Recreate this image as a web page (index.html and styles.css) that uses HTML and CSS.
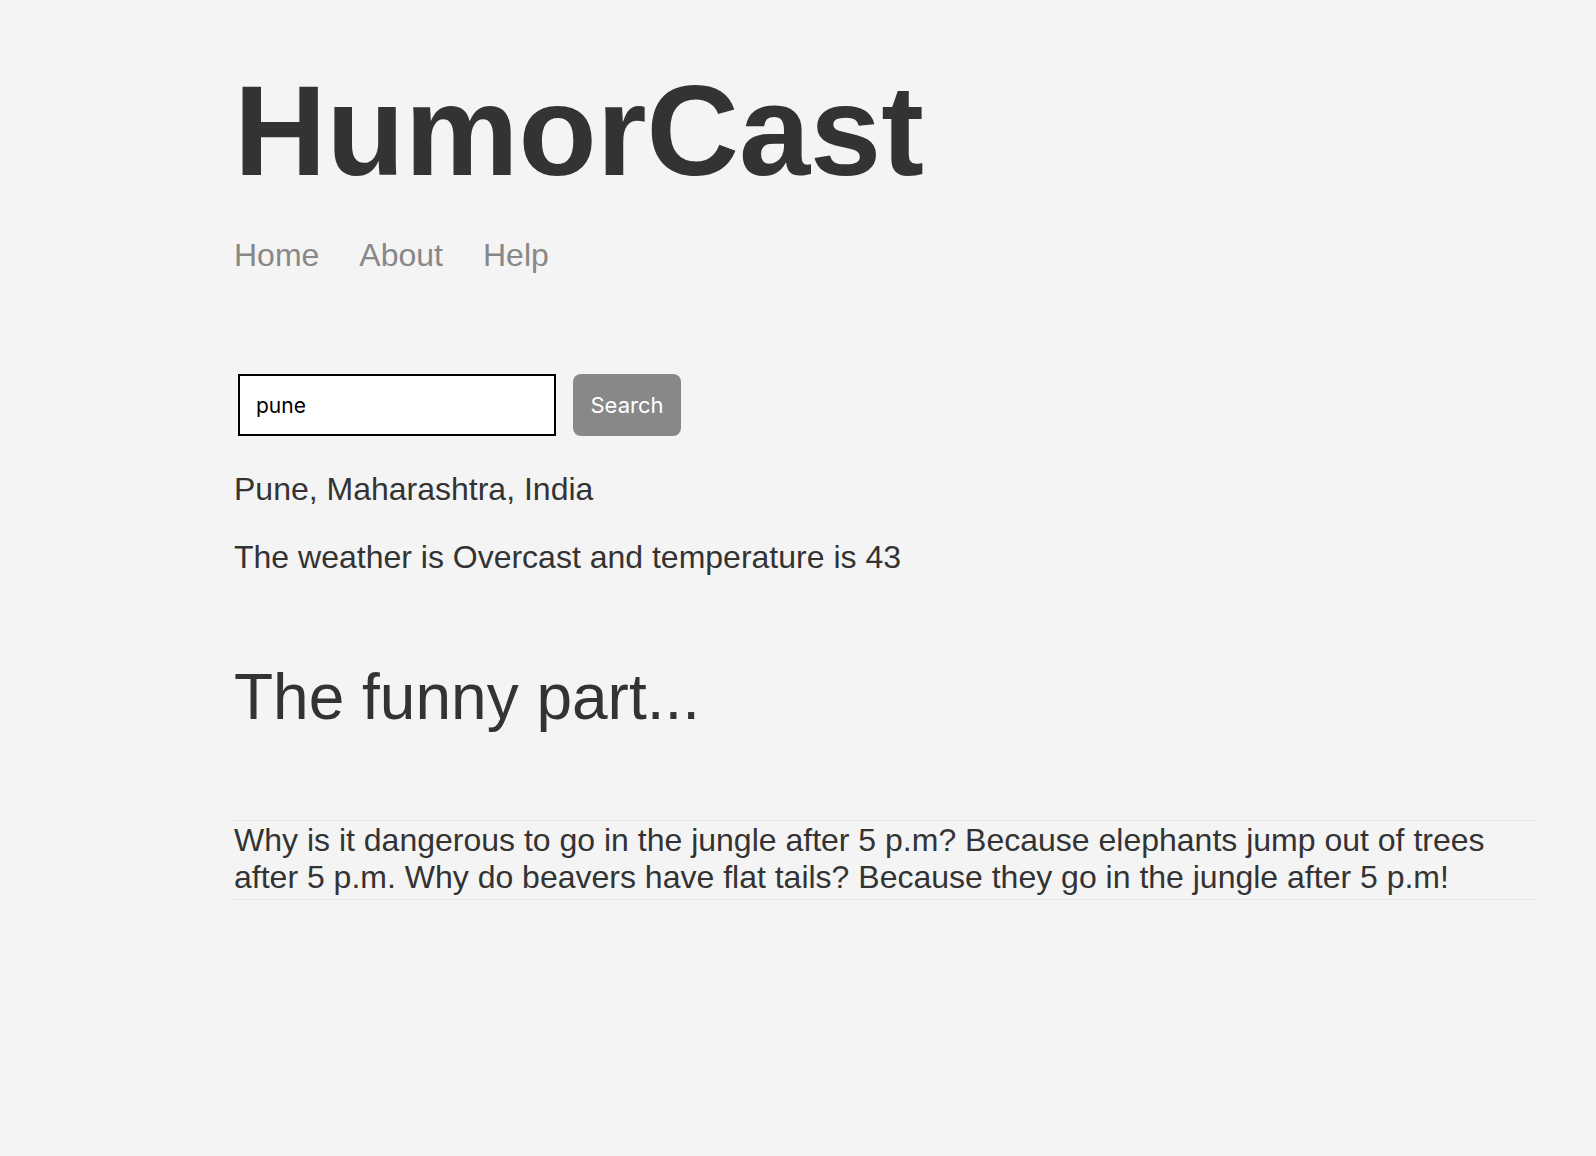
FILE: index.html
```html
<!DOCTYPE html>
<html lang="en">
<head>
<meta charset="utf-8">
<title>HumorCast</title>
<link rel="stylesheet" href="styles.css">
</head>
<body>
<div class="page">
  <h1 class="brand">HumorCast</h1>
  <nav class="nav">
    <a class="nav-link" href="#">Home</a>
    <a class="nav-link" href="#">About</a>
    <a class="nav-link" href="#">Help</a>
  </nav>
  <form class="search" onsubmit="return false">
    <input class="search-input" type="text" value="pune">
    <button class="search-btn" type="submit">Search</button>
  </form>
  <p class="location">Pune, Maharashtra, India</p>
  <p class="weather">The weather is Overcast and temperature is 43</p>
  <h2 class="funny-title">The funny part...</h2>
  <div class="joke">Why is it dangerous to go in the jungle after 5 p.m? Because elephants jump out of trees after 5 p.m. Why do beavers have flat tails? Because they go in the jungle after 5 p.m!</div>
</div>
</body>
</html>
```

FILE: styles.css
```css
html, body {
  margin: 0;
  padding: 0;
  background: #f4f4f4;
}

body {
  font-family: "Liberation Sans", Arial, Helvetica, sans-serif;
  color: #333333;
  min-height: 1156px;
}

.page {
  padding: 57px 0 0 234px;
  width: 1300px;
}

.brand {
  margin: 0;
  font-size: 128px;
  font-weight: bold;
  line-height: normal;
  color: #333333;
}

.nav {
  display: flex;
  gap: 40px;
  margin-top: 33px;
  font-size: 32px;
  line-height: normal;
}

.nav-link {
  color: #888888;
  text-decoration: none;
}

.search {
  display: flex;
  align-items: stretch;
  gap: 17px;
  margin: 100px 0 0 4px;
}

.search-input {
  box-sizing: border-box;
  width: 318px;
  height: 62px;
  margin: 0;
  padding: 0 16px;
  border: 2px solid #000000;
  border-radius: 0;
  background: #ffffff;
  color: #000000;
  font-family: Inter, "Noto Sans", sans-serif;
  font-size: 21px;
  outline: none;
}

.search-btn {
  box-sizing: border-box;
  width: 108px;
  height: 62px;
  margin: 0;
  padding: 0;
  border: none;
  border-radius: 8px;
  background: #888888;
  color: #ffffff;
  font-family: Inter, "Noto Sans", sans-serif;
  font-size: 22px;
}

.location,
.weather {
  font-size: 32px;
  line-height: normal;
  margin: 0;
}

.location {
  margin-top: 35px;
}

.weather {
  margin-top: 31px;
}

.funny-title {
  margin: 84px 0 0;
  font-size: 64px;
  font-weight: normal;
  line-height: normal;
}

.joke {
  margin-top: 86px;
  padding: 1px 0 3px;
  border-top: 1px solid #e6e6e6;
  border-bottom: 1px solid #e6e6e6;
  font-size: 32px;
  line-height: normal;
}
```
